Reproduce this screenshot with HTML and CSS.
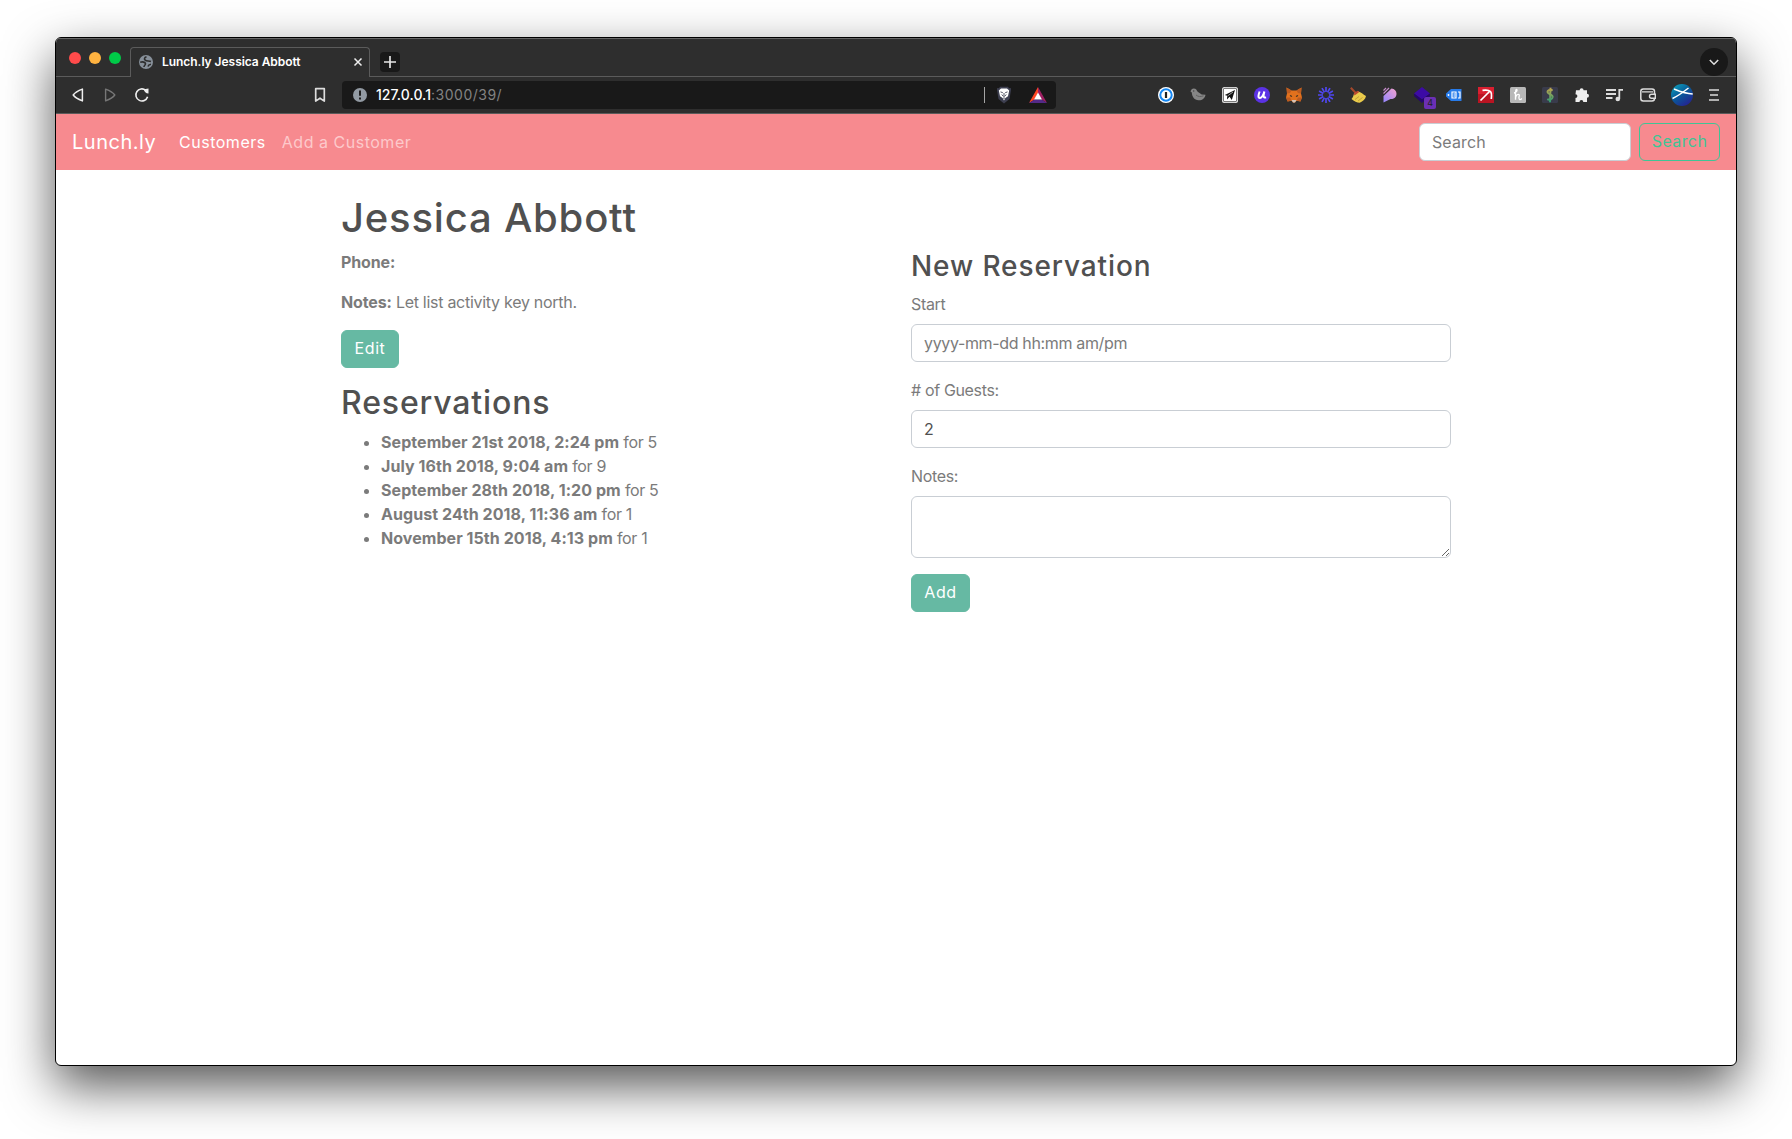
FILE: index.html
```html
<!DOCTYPE html>
<html lang="en">
<head>
<meta charset="utf-8">
<title>Lunch.ly Jessica Abbott</title>
<link rel="stylesheet" href="styles.css">
</head>
<body>
<div class="window">
  <div class="tabstrip">
    <div class="lights"><i class="light red"></i><i class="light yellow"></i><i class="light green"></i></div>
    <div class="tab">
      <svg width="14" height="14" viewBox="0 0 14 14"><circle cx="7" cy="7" r="7" fill="#87909a"/><path d="M7.500 1.800C5.500 2.500 4.800 4 6.200 5.200c1.500 1.300 3.800.3 5.800 1.300M1.200 7.200c2.800-.7 5 0 5.300 1.500.2 1.500-1.700 1.600-1.500 3.300M9 11.500c.3-1.500 1.500-2 3-2.200" fill="none" stroke="#2e2e2e" stroke-width="1.600"/></svg>
      <span class="tab-title">Lunch.ly Jessica Abbott</span>
      <svg class="close" width="10" height="10" viewBox="0 0 10 10"><path d="M1.500 1.500l7 7M8.500 1.500l-7 7" stroke="#eee" stroke-width="1.500"/></svg>
    </div>
    <div class="strip-rest">
      <div class="newtab"><svg width="12" height="12" viewBox="0 0 12 12"><path d="M6 0v12M0 6h12" stroke="#e6e6e6" stroke-width="1.700"/></svg></div>
      <div class="tabmenu"><svg width="10" height="7" viewBox="0 0 10 7"><path d="M.8 1l4.200 4.200L9.200 1" fill="none" stroke="#ddd" stroke-width="1.600"/></svg></div>
    </div>
  </div>

  <div class="toolbar">
    <div class="cell"><svg width="16" height="16" viewBox="0 0 16 16"><path d="M12.400 2.100v11.800c-4-1.500-7.700-3.800-9.200-5.900 1.500-2.100 5.200-4.400 9.200-5.900z" fill="none" stroke="#eee" stroke-width="1.500" stroke-linejoin="round"/></svg></div>
    <div class="cell"><svg width="16" height="16" viewBox="0 0 16 16"><path d="M3.600 2.100v11.800c4-1.500 7.700-3.800 9.200-5.900-1.500-2.100-5.200-4.400-9.200-5.900z" fill="none" stroke="#777" stroke-width="1.400" stroke-linejoin="round"/></svg></div>
    <div class="cell"><svg width="16" height="16" viewBox="0 0 16 16"><path d="M13.600 9.700A6 6 0 1 1 11.700 3.300" fill="none" stroke="#eee" stroke-width="1.600"/><path d="M10 2.200l4.500-.6v4.900c-2.500 0-4.500-1.800-4.500-4.300z" fill="#eee"/></svg></div>
    <div class="cell bookmark"><svg width="12" height="16" viewBox="0 0 12 16"><path d="M1.700 1.700h8.600v12.400L6 11.200l-4.300 2.900z" fill="none" stroke="#ddd" stroke-width="1.700" stroke-linejoin="round"/></svg></div>
    <div class="address">
      <svg width="14" height="14" viewBox="0 0 14 14"><circle cx="7" cy="7" r="7" fill="#929aa3"/><path d="M7 2.600v5.200M7 9.400v2" stroke="#191919" stroke-width="1.900"/></svg>
      <span class="url">127.0.0.1<span class="path">:3000/39/</span></span>
      <i class="divider"></i>
      <svg class="shield" width="16" height="18" viewBox="0 0 16 18"><path d="M4 .8h8l1 1.400 1.800-.2L15 4l-1.500 9L8 17.500 2.500 13 1 4l.2-2 1.800.2z" fill="#3d3f50"/><path d="M5 2.500h6l2.200 2L12 10.200l-2.600 1.900L8 14.500l-1.400-2.400L4 10.200 2.800 4.500z" fill="#fff"/><path d="M4.500 5.900l2.300.8M11.500 5.900l-2.300.8M8 7v2.500M5.800 8.500l1.400 1.700h1.600l1.400-1.700M7 12.100h2" fill="none" stroke="#3d3f50" stroke-width=".9"/></svg>
      <svg width="18" height="16" viewBox="0 0 18 16"><path d="M9 0L0 16l5.500-3.500L9 6z" fill="#ff4724"/><path d="M9 0l9 16-5.500-3.500L9 6z" fill="#9e1f63"/><path d="M0 16h18l-5.500-3.500h-7z" fill="#542a88"/><path d="M9 5.500l4 7H5z" fill="#fff"/></svg>
    </div>

    <div class="extensions">
      <div class="cell"><svg width="16" height="16" viewBox="0 0 16 16"><circle cx="8" cy="8" r="8" fill="#fff"/><circle cx="8" cy="8" r="5.700" fill="#fff" stroke="#1588f5" stroke-width="2"/><path d="M8 5v6" stroke="#222" stroke-width="2.200"/></svg></div>
      <div class="cell"><svg width="16" height="16" viewBox="0 0 16 16"><path d="M.5 4.500C1.200 2.500 2 1.500 3.700 1.500c2.500 0 3 1.800 4 3.300l4 2.700 3.800.3c-.5 3.700-3.400 5.700-7 5.500C4.500 13 2 10 1.800 5.500z" fill="#858585"/><path d="M6 8c2 1.800 5 2 7.500.8" fill="none" stroke="#606060"/><circle cx="3.700" cy="4" r=".7" fill="#444"/></svg></div>
      <div class="cell"><svg width="16" height="16" viewBox="0 0 16 16"><rect width="16" height="16" rx="2.500" fill="#eee"/><rect x="1.300" y="1.300" width="13.400" height="13.400" rx="1.500" fill="#fff" stroke="#333" stroke-width=".8"/><path d="M13 3L9.800 13 7.500 9.700 5 12.500l.2-3.700L2.800 8z" fill="#111"/><path d="M11 5L5.500 9" stroke="#fff" stroke-width=".6"/></svg></div>
      <div class="cell"><svg width="16" height="16" viewBox="0 0 16 16"><circle cx="8" cy="8" r="8" fill="#5b32e5"/><path d="M5.600 4.500c-1.200 3.500-2 6.300.4 6.400 2.200 0 3.300-2.900 4.400-6.400-1 3.400-1.700 6.900 1.700 5.900" fill="none" stroke="#fff" stroke-width="2"/></svg></div>
      <div class="cell"><svg width="16" height="16" viewBox="0 0 16 16"><path d="M.5.5l5 3h5l5-3-.5 6 1 4-1.600 4-4-.8L9 15.500H7l-1.400-1.800-4 .8L0 10.500l1-4z" fill="#e2711d"/><path d="M0 10.500h4l1.500 3-4 1zM16 10.500h-4l-1.500 3 4 1zM.5.5l5 3L4 6 1 6.500zM15.500.5l-5 3L12 6l3 .5z" fill="#bd5c21"/><path d="M5.500 13h5L9 15.500H7z" fill="#d5c4b8"/><path d="M4 8.500l2 1M12 8.500l-2 1" stroke="#432" stroke-width="1.300"/></svg></div>
      <div class="cell"><svg width="16" height="16" viewBox="-8 -8 16 16"><path d="M0-3V-8M0 3V8M3 0H8M-3 0H-8M2.600-1.500l4.300-2.500M-2.600 1.500L-6.900 4M1.500-2.600L4-6.900M-1.500 2.600L-4 6.900M2.600 1.500L6.900 4M-2.600-1.500L-6.900-4M1.500 2.600L4 6.900M-1.500-2.600L-4-6.900" stroke="#4f47f0" stroke-width="1.700"/></svg></div>
      <div class="cell"><svg width="16" height="16" viewBox="0 0 16 16"><path d="M.8.8l4.700 5" stroke="#a5482b" stroke-width="2"/><path d="M4 6.500l4-2.300c3 1 5 3 8 4.800-.5 3-3 5.500-6.300 6.700C7 15.500 4 14.500 1.500 12c1.500-1.500 2-3.500 2.500-5.500z" fill="#eacb4b"/><path d="M3.800 6.500l3.700-2.700 1.800 1.300-4.800 3.500z" fill="#bb4930"/><path d="M5 12.500l4-3M8 14l4.500-3.500" stroke="#c3a13a"/></svg></div>
      <div class="cell"><svg width="16" height="16" viewBox="0 0 16 16"><defs><linearGradient id="pg" x1="0" y1="1" x2="1" y2="0"><stop offset="0" stop-color="#9385ff"/><stop offset="1" stop-color="#f3a2ce"/></linearGradient></defs><path d="M1.500 15.500V9l8-7.500c3 .3 5 2.500 5 5.300 0 3.600-2.800 5.400-6 5.200z" fill="url(#pg)"/><path d="M1.500 3.500l2.500-2.500M1.500 6.500L7 1" stroke="#c48bca" stroke-width="1.200"/></svg></div>
      <div class="cell badge-cell"><svg width="16" height="16" viewBox="0 0 16 16"><path d="M8 0l8 6.500-8 6L0 6.500z" fill="#3c0ba5"/><path d="M0 6.500V9l8 7 8-7V6.500l-8 6z" fill="#25056e"/></svg><span class="badge">4</span></div>
      <div class="cell"><svg width="16" height="16" viewBox="0 0 16 16"><path d="M5 2h10.500v12H5L0 9.500v-3z" fill="#277bea"/><circle cx="2.500" cy="8" r=".9" fill="#fff"/><path d="M6 5h4v6H6zM12 5h2v6h-2" fill="none" stroke="#fff" stroke-width="1.200"/><path d="M7.500 7h1.500M7.500 9h1.500" stroke="#fff"/></svg></div>
      <div class="cell"><svg width="16" height="16" viewBox="0 0 16 16"><path d="M0 0h16v16H0z" fill="#ba1422"/><path d="M0 0h16v7H0z" fill="#d91f30"/><path d="M2.500 13.500L12 4M4.500 3.300c4-.6 7 .2 8 1.200 1 1 1.200 4 .8 7.500" fill="none" stroke="#fff" stroke-width="1.700"/></svg></div>
      <div class="cell"><svg width="16" height="16" viewBox="0 0 16 16"><rect width="16" height="16" rx="1.500" fill="#b8b8b8"/><path d="M4 6c2.500-.5 4-3.500 2.300-3.500-1 0-.8 4.500-.8 10.300 0-3.500 1-5.500 2.800-5.500 1.700 0 .7 2 .6 3.500 0 2 1.200 2.300 3 .7" fill="none" stroke="#fff" stroke-width="1.300"/></svg></div>
      <div class="cell"><svg width="16" height="16" viewBox="0 0 16 16"><defs><linearGradient id="sg" x1="0" y1="0" x2="0" y2="1"><stop offset="0" stop-color="#c5a54b"/><stop offset="1" stop-color="#2d9b72"/></linearGradient></defs><rect width="16" height="16" rx="1.500" fill="#393b4b"/><path d="M10.700 3.500C8 2 5 3.500 5.700 5.500S11 7.500 10.700 10s-3.500 3.500-5.400 2.200M8.500.8L8 15.200" fill="none" stroke="url(#sg)" stroke-width="2"/></svg></div>
      <div class="cell"><svg width="16" height="16" viewBox="0 0 16 16"><path d="M2 3.200h3.600a2 2 0 1 1 4 0H13v3.500a2 2 0 1 1 0 4v4.300H9.300a1.900 1.900 0 1 0-3.800 0H1.500v-4a1.900 1.900 0 1 0 0-3.800z" fill="#eee"/></svg></div>
      <div class="cell"><svg width="17" height="14" viewBox="0 0 17 14"><path d="M0 2h10M0 6h10M0 10h6.500M13.300 11V1.800H17" fill="none" stroke="#ddd" stroke-width="1.800"/><circle cx="11.800" cy="11" r="2.300" fill="#ddd"/></svg></div>
      <div class="cell wallet"><svg width="16" height="14" viewBox="0 0 16 14"><rect x=".8" y="1" width="13.700" height="12" rx="2.500" fill="none" stroke="#ddd" stroke-width="1.500"/><path d="M2 3.800h11" stroke="#ddd" stroke-width="1.300"/><path d="M15.300 6.200h-3.800a2 2 0 0 0 0 4h3.800z" fill="#2e2e2e" stroke="#ddd" stroke-width="1.400"/></svg></div>
      <div class="cell avatar"><svg width="22" height="22" viewBox="0 0 22 22"><defs><linearGradient id="ag" x1="0" y1="0" x2=".7" y2="1"><stop offset="0" stop-color="#0eaac0"/><stop offset=".5" stop-color="#075d9b"/><stop offset="1" stop-color="#242391"/></linearGradient></defs><circle cx="11" cy="11" r="11" fill="url(#ag)"/><path d="M3 5c5 2 11 4.500 18.700 5M1.500 14.500C8 11.500 13 7.500 17.500 4" fill="none" stroke="#fff" stroke-width="1.500"/></svg></div>
      <div class="cell menu"><svg width="10" height="14" viewBox="0 0 10 14"><path d="M0 2h10M1 7h8M0 12h10" stroke="#ddd" stroke-width="1.700"/></svg></div>
    </div>
  </div>

  <nav class="navbar">
    <a class="brand">Lunch.ly</a>
    <a class="link active">Customers</a>
    <a class="link">Add a Customer</a>
    <form class="search">
      <input class="control search-input" type="text" placeholder="Search">
      <button class="btn btn-outline" type="button">Search</button>
    </form>
  </nav>

  <main class="container">
    <h1>Jessica Abbott</h1>
    <div class="row">
      <section>
        <p class="phone"><b>Phone:</b></p>
        <p class="notes"><b>Notes:</b> Let list activity key north.</p>
        <button class="btn edit" type="button">Edit</button>
        <h2>Reservations</h2>
        <ul>
          <li><b>September 21st 2018, 2:24 pm</b> for 5</li>
          <li><b>July 16th 2018, 9:04 am</b> for 9</li>
          <li><b>September 28th 2018, 1:20 pm</b> for 5</li>
          <li><b>August 24th 2018, 11:36 am</b> for 1</li>
          <li><b>November 15th 2018, 4:13 pm</b> for 1</li>
        </ul>
      </section>
      <form>
        <h3>New Reservation</h3>
        <label for="start">Start</label>
        <input class="control" id="start" type="text" placeholder="yyyy-mm-dd hh:mm am/pm">
        <label for="guests"># of Guests:</label>
        <input class="control" id="guests" type="text" value="2">
        <label for="notes">Notes:</label>
        <textarea class="control" id="notes"></textarea>
        <button class="btn add" type="button">Add</button>
      </form>
    </div>
  </main>
</div>
</body>
</html>
```
FILE: styles.css
```css
* { box-sizing: border-box; }

body {
  margin: 0;
  height: 1139px;
  padding: 37px 55px;
  overflow: hidden;
  background: #fff;
  color: #7b7b7b;
  font: 16px/24px Inter, sans-serif;
  letter-spacing: -.35px;
}

svg { display: block; flex: none; }

.window {
  width: 1682px;
  height: 1029px;
  border: 1px solid #000;
  border-radius: 6px;
  overflow: hidden;
  background: #fff;
  box-shadow: 0 20px 50px rgba(0, 0, 0, .67);
}

/* Browser chrome */
.tabstrip {
  display: flex;
  align-items: flex-end;
  height: 39px;
  background: #2e2e2e;
  border-top: 1px solid #666;
}
.lights {
  display: flex;
  gap: 8px;
  width: 74px;
  height: 38px;
  padding: 13px 0 0 13px;
  border-bottom: 1px solid #5b5b5b;
}
.light { width: 12px; height: 12px; border-radius: 50%; }
.red { background: #ff4b4b; }
.yellow { background: #ffb340; }
.green { background: #00ca48; }
.tab {
  display: flex;
  align-items: center;
  width: 240px;
  height: 30px;
  padding: 0 6px 1px 8px;
  border: 1px solid #5b5b5b;
  border-bottom: 0;
  border-radius: 4px 4px 0 0;
}
.tab-title {
  margin-left: 9px;
  color: #fff;
  font-size: 12px;
  font-weight: 600;
  letter-spacing: -.04px;
}
.close { margin-left: auto; }
.strip-rest {
  display: flex;
  flex: 1;
  justify-content: space-between;
  height: 38px;
  padding: 9px 8px 0 10px;
  border-bottom: 1px solid #5b5b5b;
}
.newtab, .tabmenu { display: flex; align-items: center; justify-content: center; background: #191919; }
.newtab { width: 20px; height: 20px; margin-top: 4px; border-radius: 4px; }
.tabmenu { width: 28px; height: 28px; border-radius: 50%; }

.toolbar {
  display: flex;
  align-items: center;
  height: 37px;
  padding: 0 6px;
  background: #2e2e2e;
  border-bottom: 1px solid #5b5b5b;
}
.cell { display: flex; align-items: center; justify-content: center; width: 32px; height: 28px; flex: none; }
.bookmark { margin-left: 146px; }
.address {
  display: flex;
  align-items: center;
  width: 714px;
  height: 28px;
  margin-left: 6px;
  padding: 0 9px 0 11px;
  border-radius: 4px;
  background: #191919;
}
.url { margin-left: 9px; color: #fff; font-size: 14px; font-weight: 500; letter-spacing: .05px; }
.path { color: #828282; font-weight: 400; letter-spacing: .5px; }
.divider { width: 1px; height: 16px; margin-left: auto; background: #a5a5a5; }
.shield { margin: 0 17px 0 11px; }
.extensions { display: flex; margin-left: auto; }
.wallet { width: 36px; }
.avatar { width: 32px; }
.badge-cell { position: relative; }
.badge {
  position: absolute;
  left: 18px;
  top: 16px;
  width: 12px;
  height: 12px;
  border-radius: 2px;
  background: #6b2fb5;
  color: #222;
  font-size: 9px;
  line-height: 12px;
  text-align: center;
}

/* Site navigation */
.navbar {
  display: flex;
  align-items: center;
  height: 56px;
  padding: 0 16px;
  background: #f78a8f;
}
.brand, .link { padding-bottom: 1px; letter-spacing: .52px; }
.brand { width: 84px; margin-right: 23px; color: #fff; font-size: 20px; }
.link { margin-right: 16px; color: #fdc9cb; }
.link.active { color: #fff; }
.search { display: flex; gap: 8px; margin-left: auto; letter-spacing: .1px; }

.control {
  display: block;
  width: 100%;
  height: 38px;
  padding: 6px 12px;
  border: 1px solid #c9ced4;
  border-radius: 6px;
  background: #fff;
  color: #505050;
  font: inherit;
  letter-spacing: inherit;
}
.control::placeholder { color: #7b7b7b; opacity: 1; }
.search-input { width: 212px; }

.btn {
  display: block;
  height: 38px;
  padding: 0 0 2px;
  border: 1px solid #66b9a3;
  border-radius: 6px;
  background: #66b9a3;
  color: #fff;
  font: 16px/24px Inter, sans-serif;
  letter-spacing: .6px;
}
.btn-outline { width: 81px; border-color: #3fc495; background: transparent; color: #3fc495; letter-spacing: .4px; }
.edit { width: 58px; }
.add { width: 59px; }

/* Customer page */
.container { width: 1140px; margin: 0 auto; padding: 24px 15px 0; }
.row { display: grid; grid-template-columns: 540px 540px; gap: 30px; }
h1, h2, h3 { margin: 0 0 8px; color: #505050; font-weight: 500; line-height: 1.2; }
h1 { font-size: 40px; letter-spacing: .8px; }
h2 { margin-top: 16px; font-size: 32px; letter-spacing: .85px; }
h3 { font-size: 28px; letter-spacing: .9px; }
p { margin: 0 0 16px; letter-spacing: -.28px; }
p b { letter-spacing: -.15px; }
ul { margin: 0; padding-left: 40px; }
li b { letter-spacing: .06px; }
label { display: block; margin-bottom: 8px; }
form .control + label { margin-top: 16px; }
textarea.control { height: 62px; margin-bottom: 16px; resize: vertical; }
```
